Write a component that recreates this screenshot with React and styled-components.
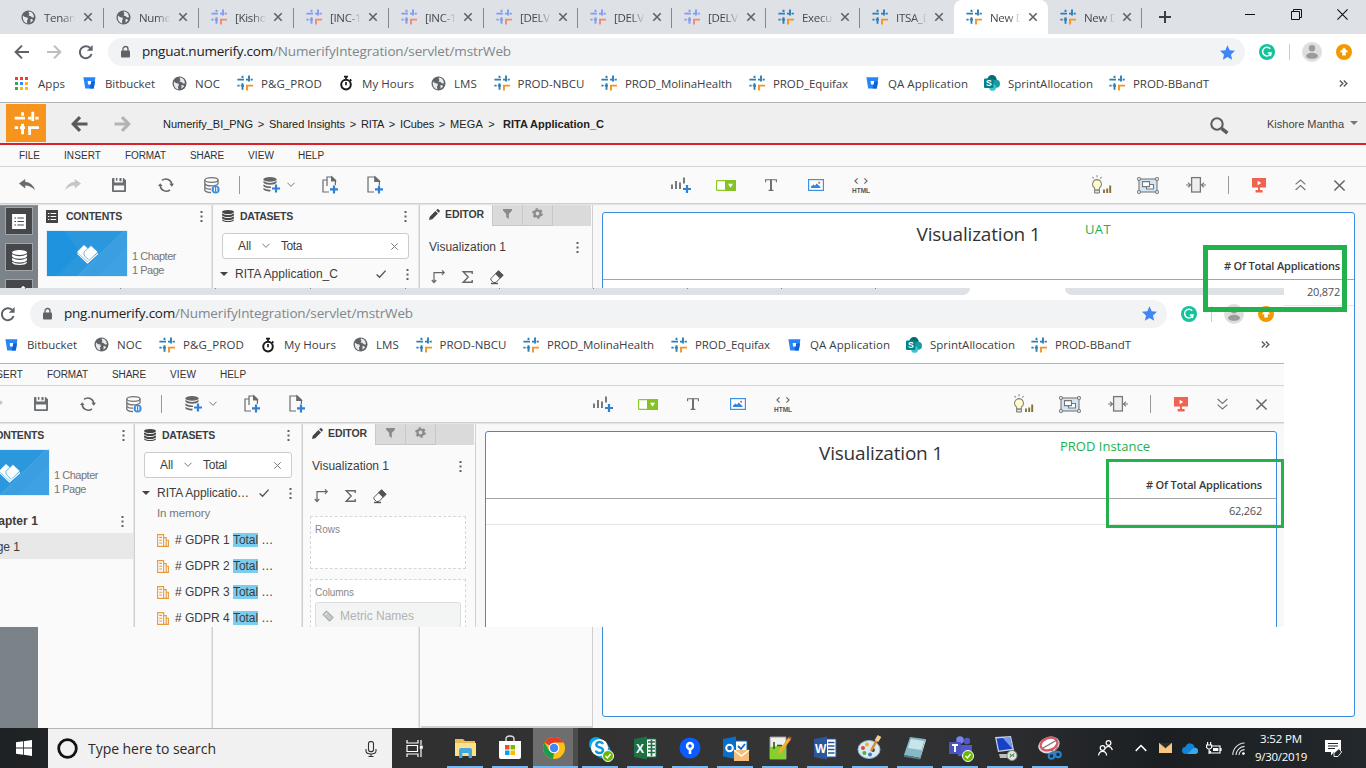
import React, { useLayoutEffect, useRef } from "react";
import styled, { createGlobalStyle, css } from "styled-components";

const UI = `"Open Sans", "Noto Sans", sans-serif`;
const ARIAL = `"Liberation Sans", Arial, sans-serif`;

const Global = createGlobalStyle`
  body { margin: 0; background: #fff; font-family: ${ARIAL}; overflow: hidden; }
  * { box-sizing: border-box; }
  svg { display: block; flex: none; overflow: visible; }
`;

/* Text tracked so that it fills a given width */
const FitSpan = styled.span`
  display: inline-block;
  white-space: pre;
  flex: none;
`;
function Fit({ w, children }) {
  const ref = useRef(null);
  useLayoutEffect(() => {
    const el = ref.current;
    el.style.letterSpacing = "0px";
    const n = el.textContent.length;
    el.style.letterSpacing = (w - el.getBoundingClientRect().width) / n + "px";
  }, [w, children]);
  return <FitSpan ref={ref}>{children}</FitSpan>;
}

/* ---------- layout ---------- */
const Screen = styled.div`
  position: relative;
  width: 1366px;
  height: 768px;
  overflow: hidden;
  display: flex;
  flex-direction: column;
  background: #fff;
`;
const Overlay = styled.div`
  position: absolute;
  left: 0;
  top: 288px;
  width: 1284px;
  height: 339px;
  overflow: hidden;
`;
const Shifted = styled.div`
  width: 1366px;
  height: 600px;
  margin-left: -78px;
  display: flex;
  flex-direction: column;
  background: #fff;
`;

/* ---------- browser ---------- */
const Strip = styled.div`
  height: ${(p) => (p.$sliver ? 7 : 34)}px;
  flex: none;
  background: #dee1e6;
  display: flex;
  align-items: flex-end;
  padding-left: 9px;
  overflow: hidden;
`;
const TabBox = styled.div`
  width: ${(p) => p.$w}px;
  height: 34px;
  flex: none;
  display: flex;
  align-items: center;
  padding-left: 12px;
  font: 11.5px ${UI};
  color: #45494d;
  border-radius: ${(p) => (p.$active ? "8px 8px 0 0" : "0")};
  background: ${(p) => (p.$active ? "#fff" : "transparent")};
  position: relative;
  ${(p) =>
    p.$sep &&
    css`
      &::after {
        content: "";
        position: absolute;
        right: 0;
        top: 8px;
        width: 1px;
        height: 20px;
        background: #85898e;
      }
    `}
`;
const CurvedTab = styled.div`
  width: 109px;
  height: 7px;
  flex: none;
  margin: 0 -7px;
  background: #fff;
  position: relative;
  &::before, &::after {
    content: "";
    position: absolute;
    top: 0;
    width: 7px;
    height: 7px;
    background: #dee1e6;
  }
  &::before { left: 0; border-bottom-right-radius: 7px; }
  &::after { right: 0; border-bottom-left-radius: 7px; }
`;
const TabTitle = styled.div`
  width: 32px;
  margin-left: 8px;
  overflow: hidden;
  white-space: nowrap;
  letter-spacing: -0.3px;
  mask-image: linear-gradient(90deg, #000 55%, transparent 98%);
`;
const TabClose = styled.div`
  margin-left: ${(p) => (p.$near ? 7 : 8)}px;
`;
const NewTab = styled.div`
  height: 34px;
  display: flex;
  align-items: center;
  margin-left: 17px;
`;
const WinButtons = styled.div`
  height: 34px;
  margin-left: auto;
  display: flex;
  gap: 35px;
  padding: 9px 18px 0 0;
`;
const NavRow = styled.div`
  height: ${(p) => (p.$low ? 37 : 36)}px;
  flex: none;
  background: #fff;
  display: flex;
  align-items: center;
  padding-left: 14px;
`;
const NavIcon = styled.div`
  width: 32px;
`;
const Omnibox = styled.div`
  width: 1137px;
  height: 28px;
  border-radius: 14px;
  background: #f1f3f4;
  margin-left: -2px;
  padding: 0 10px 0 13px;
  display: flex;
  align-items: center;
  font: 13.5px ${UI};
  color: #80868b;
  svg:last-child { margin-left: auto; }
`;
const Url = styled.div`
  margin-left: 12px;
  height: 20px;
  line-height: 19px;
  display: flex;
`;
const Host = styled.span`
  color: #202124;
`;
const NavRight = styled.div`
  display: flex;
  align-items: center;
  margin-left: 14px;
`;
const ThinRule = styled.div`
  width: 1px;
  height: 16px;
  background: #ccc;
  margin: 0 12px 0 14px;
`;
const BookmarkRow = styled.div`
  height: ${(p) => (p.$low ? 32 : 33)}px;
  flex: none;
  border-bottom: 1px solid #b4b4b4;
  display: flex;
  align-items: center;
  padding: 0 18px 6px 14px;
  font: 11.5px ${UI};
  color: #3c4043;
  background: #fff;
`;
const Bookmark = styled.div`
  width: ${(p) => p.$w}px;
  flex: none;
  display: flex;
  align-items: center;
`;
const BookmarkIcon = styled.div`
  width: 16px;
  margin-right: 8px;
  display: flex;
  justify-content: center;
`;
const More = styled.div`
  margin-left: auto;
`;

/* ---------- application ---------- */
const AppHeader = styled.div`
  height: 42px;
  flex: none;
  background: #efefef;
  border-bottom: 2px solid #d9202b;
  display: flex;
  align-items: center;
  padding: 0 8px 0 6px;
  font: 11px ${ARIAL};
  color: #222;
`;
const Logo = styled.div`
  width: 40px;
  height: 38px;
  background: #f7941e;
  display: flex;
  align-items: center;
  justify-content: center;
`;
const HeadArrow = styled.div`
  margin-left: ${(p) => p.$ml}px;
  margin-top: 2px;
`;
const Crumbs = styled.div`
  display: flex;
  margin-left: 32px;
  margin-top: 2px;
  white-space: pre;
`;
const CrumbGap = styled.span`
  width: ${(p) => p.$w || 16}px;
  text-align: center;
`;
const User = styled.div`
  margin-left: auto;
  display: flex;
  align-items: center;
  color: #444;
`;
const SearchGlass = styled.div`
  padding-top: 5px;
`;
const UserName = styled.div`
  margin: 2px 6px 0 38px;
`;
const MenuBar = styled.div`
  height: 22px;
  flex: none;
  background: #fafafa;
  border-bottom: 1px solid #d4d4d4;
  display: flex;
  align-items: center;
  gap: 24px;
  padding-left: 19px;
  font: 10px ${ARIAL};
  color: #333;
`;
const ToolRow = styled.div`
  height: 37px;
  flex: none;
  background: #fafafa;
  border-bottom: 1px solid #cfcfcf;
  box-shadow: 0 1px 1px #e4e4e4;
  display: flex;
  align-items: center;
  padding-left: 4px;
  position: relative;
`;
const Tool = styled.div`
  width: ${(p) => p.$w}px;
  margin-left: ${(p) => p.$ml || 0}px;
  flex: none;
  display: flex;
  justify-content: center;
`;
const ToolRule = styled.div`
  width: 1px;
  height: 18px;
  margin-left: ${(p) => p.$ml}px;
  background: #999;
`;
const Workspace = styled.div`
  flex: 1;
  min-height: 0;
  display: flex;
  background: #fafafa;
`;
const Rail = styled.div`
  width: 38px;
  flex: none;
  background: #7b8288;
  padding: 3px 0 0 5px;
  height: 100%;
`;
const RailButton = styled.div`
  width: 28px;
  height: 28px;
  margin-bottom: 8px;
  background: #45474a;
  border: 1px solid #a2a5a8;
  display: flex;
  align-items: center;
  justify-content: center;
`;
const Panel = styled.div`
  width: ${(p) => p.$w}px;
  flex: none;
  border-right: 1px solid #cfcfcf;
  box-shadow: inset -1px 0 0 ${(p) => (p.$soft ? "#e6e6e6" : "transparent")};
  background: #fafafa;
  color: #3d3d3d;
  font: 12px ${ARIAL};
  display: flex;
  flex-direction: column;
`;
const PanelHead = styled.div`
  height: 24px;
  flex: none;
  display: flex;
  align-items: center;
  font: bold 10.5px ${ARIAL};
  padding: 0 ${(p) => p.$pr}px 0 8px;
  gap: ${(p) => p.$gap || 6}px;
  svg:last-child { margin-left: auto; }
`;
const DocSummary = styled.div`
  display: flex;
  align-items: flex-end;
  gap: 4px;
  padding: 3px 0 0 8px;
  height: 49px;
  flex: none;
`;
const Thumb = styled.div`
  width: 82px;
  height: 47px;
  border: 1px solid #e6eef5;
  overflow: hidden;
`;
const Counts = styled.div`
  font-size: 11px;
  line-height: 14px;
  color: #777;
`;
const Chapter = styled.div`
  height: 24px;
  flex: none;
  margin-top: 13px;
  padding: 0 10px 0 22px;
  font-weight: bold;
  display: flex;
  align-items: center;
  justify-content: space-between;
`;
const PageRow = styled.div`
  height: 26px;
  flex: none;
  background: #e8e8e8;
  margin-right: 1px;
  padding-left: 22px;
  line-height: 28px;
`;
const Search = styled.div`
  height: 26px;
  flex: none;
  margin: 5px 10px 0 8px;
  border: 1px solid #ccc;
  border-radius: 3px;
  background: #fff;
  display: flex;
  align-items: center;
  padding: 0 10px 0 15px;
  svg:last-child { margin-left: auto; }
`;
const SearchText = styled.div`
  margin-left: 11px;
`;
const SearchScope = styled.div`
  margin-right: 11px;
`;
const DatasetRow = styled.div`
  height: 26px;
  flex: none;
  margin-top: 2px;
  display: flex;
  align-items: center;
  padding: 0 10px 0 6px;
`;
const DatasetName = styled.div`
  margin: 0 auto 0 7px;
`;
const Check = styled.div`
  margin-right: 20px;
`;
const Memory = styled.div`
  height: 14px;
  flex: none;
  line-height: 14px;
  padding-left: 21px;
  margin-bottom: 7px;
  font-size: 11.5px;
  color: #777;
`;
const Attr = styled.div`
  height: 26px;
  flex: none;
  padding-left: 21px;
  display: flex;
  align-items: center;
  gap: 6px;
`;
const Mark = styled.span`
  background: #7bcdf0;
  display: inline-block;
  height: 14px;
  line-height: 14px;
`;
const AttrText = styled.div`
  display: flex;
  line-height: 14px;
  white-space: pre;
`;
const EditorTabs = styled.div`
  height: 22px;
  flex: none;
  display: flex;
  margin-right: 1px;
  background: #dadada;
`;
const EditorTab = styled.div`
  width: ${(p) => p.$w}px;
  display: flex;
  align-items: center;
  justify-content: ${(p) => (p.$on ? "flex-start" : "center")};
  gap: 5px;
  padding: 0 0 2px ${(p) => (p.$on ? 8 : 0)}px;
  font: bold 10.5px ${ARIAL};
  background: ${(p) => (p.$on ? "#fafafa" : "#dadada")};
  border-right: 1px solid #c8c8c8;
  border-bottom: ${(p) => (p.$on ? "none" : "1px solid #c8c8c8")};
`;
const EditorTitle = styled.div`
  height: 41px;
  flex: none;
  padding: 1px 13px 0 8px;
  display: flex;
  align-items: center;
  justify-content: space-between;
`;
const EditorTools = styled.div`
  height: 18px;
  flex: none;
  display: flex;
  align-items: center;
  padding: 1px 0 0 10px;
  gap: 17px;
`;
const EditorEnd = styled.div`
  margin-top: auto;
  height: 2px;
  background: #cfcfcf;
`;
const Drop = styled.div`
  margin: ${(p) => p.$mt}px 9px 0 6px;
  height: ${(p) => p.$h}px;
  flex: none;
  border: 1px dashed #d6d6d6;
  background: #fff;
  padding: 7px 4px 0;
  font: 10px ${ARIAL};
  color: #888;
`;
const Metric = styled.div`
  height: 26px;
  margin-top: 4px;
  border: 1px solid #ddd;
  border-radius: 3px;
  background: #f3f5f5;
  display: flex;
  align-items: center;
  padding: 1px 0 0 6px;
  gap: 6px;
  font-size: 12px;
  color: #b2b2b2;
`;
const Stage = styled.div`
  flex: 1;
  min-width: 0;
  background: #f8f8f8;
  padding: 8px 11px 11px 9px;
  display: flex;
`;
const Canvas = styled.div`
  flex: 1;
  border: 1px solid #3a8dde;
  border-radius: 3px;
  background: #fff;
  font-family: ${UI};
  color: #333;
`;
const VizTitle = styled.div`
  height: 42px;
  text-align: center;
  font-size: 19px;
  line-height: 43px;
`;
const HeadCell = styled.div`
  height: 25px;
  border-bottom: 1px solid #a5a5a5;
  text-align: right;
  padding-right: 14px;
  font-size: 11px;
  font-weight: 600;
  line-height: 22px;
  color: #3a3a3a;
`;
const ValueCell = styled.div`
  height: 26px;
  border-bottom: 1px solid #e6e6e6;
  text-align: right;
  padding-right: 14px;
  font-size: 11px;
  line-height: 23px;
  color: #505050;
`;

/* ---------- annotations ---------- */
const GreenBox = styled.div`
  position: absolute;
  left: ${(p) => p.$x}px;
  top: ${(p) => p.$y}px;
  width: ${(p) => p.$w}px;
  height: ${(p) => p.$h}px;
  border: ${(p) => p.$b}px solid #22b14c;
`;
const GreenText = styled.div`
  position: absolute;
  left: ${(p) => p.$x}px;
  top: ${(p) => p.$y}px;
  font: 13px/16px ${UI};
  color: #22b14c;
`;

/* ---------- taskbar ---------- */
const Taskbar = styled.div`
  height: 40px;
  flex: none;
  background: linear-gradient(90deg, #1f2224 0, #303030 30%, #353535 60%, #2e2f31 72%, #1b1f22 85%, #22282c 100%);
  display: flex;
  align-items: center;
  position: relative;
`;
const Start = styled.div`
  width: 48px;
  display: flex;
  justify-content: center;
`;
const TaskSearch = styled.div`
  width: 344px;
  height: 40px;
  background: #f1f1f1;
  border-top: 1px solid #b5b5b5;
  display: flex;
  align-items: center;
  padding: 0 15px 0 9px;
  font: 14px ${UI};
  color: #2b2b2b;
  gap: 10px;
  svg:last-child { margin-left: auto; }
`;
const TaskCell = styled.div`
  width: 45px;
  height: 40px;
  flex: none;
  display: flex;
  align-items: center;
  justify-content: center;
  position: relative;
  ${(p) =>
    p.$run &&
    css`
      &::after {
        content: "";
        position: absolute;
        left: ${p.$hot ? 0 : 4}px;
        right: ${p.$hot ? 0 : 5}px;
        bottom: 0;
        height: 2px;
        background: #76b9f5;
      }
    `}
  ${(p) => p.$hot && css`background: linear-gradient(90deg, #6e6e6e 40px, #4c4c4c 40px); padding-right: 3px;`}
`;
const Gap = styled.div`
  width: ${(p) => p.$w}px;
  flex: none;
`;
const Tray = styled.div`
  display: flex;
  align-items: center;
  margin-left: 21px;
`;
const TrayItem = styled.div`
  width: 24.5px;
  display: flex;
  justify-content: center;
`;
const Clock = styled.div`
  width: 62px;
  margin-left: -1px;
  font: 11.5px/18px ${UI};
  color: #fff;
  text-align: center;
`;

/* ---------- icons ---------- */
const Hash = ({ s = 16, c = "#2a7fb5", o = "#f7941e", k = 1.9 }) => (
  <svg width={s} height={s} viewBox="0 0 16 16" fill="none" stroke={c} strokeWidth={k}>
    <path d="M5.5 .8V3M.4 4.6H7M12 .4V6.4M9 4.6H11M13.6 4.6H15.8M.4 10.6H2.6M3.8 10.6H7M5.5 8.2V14.8" />
    <path d="M9 10.6H16M10 10.6V15.4" stroke={o} />
  </svg>
);
const LightHash = () => <Hash c="#7f9cf5" o="#f58a6d" />;
const Globe = () => (
  <svg width="15" height="15" viewBox="0 0 15 15">
    <circle cx="7.5" cy="7.5" r="7" fill="#5f6368" />
    <path d="M2 5.5 Q4 7.8 6.5 7.5 Q7.5 9.5 6 10.5 L6.3 13.4 Q2.3 12.4 1.8 8ZM8 1.6 Q7 3 8.5 4 L7.5 5.6 L10 6.2 Q11 8.4 13 7 Q13 4 10.5 2.3ZM9.5 9 Q12 8.5 12 10.5 L9.5 12.8Z" fill="#e8eaec" />
  </svg>
);
const Cross = ({ s = 8, c = "#5f6368", k = 1.6 }) => (
  <svg width={s} height={s} viewBox="0 0 8 8" stroke={c} strokeWidth={k}>
    <path d="M.3 .3 7.7 7.7M7.7 .3 .3 7.7" />
  </svg>
);
const Bucket = () => (
  <svg width="13" height="12" viewBox="0 0 13 12">
    <path d="M.4 .3H12.4L10.8 11.6H2.2Z" fill="#2684ff" />
    <path d="M8 4.5H12L10.8 11.6H6.5Z" fill="#1360d6" />
    <path d="M4.6 4H8.2L7.7 7.6H5.1Z" fill="#fff" />
  </svg>
);
const Apps = () => (
  <svg width="14" height="13" viewBox="0 0 14 13">
    {["#ea4335", "#ea4335", "#ea4335", "#34a853", "#4285f4", "#fbbc05", "#34a853", "#fbbc05", "#fbbc05"].map((c, i) => (
      <rect key={i} x={(i % 3) * 5} y={Math.floor(i / 3) * 5} width="3" height="3" fill={c} />
    ))}
  </svg>
);
const Watch = () => (
  <svg width="14" height="16" viewBox="0 0 14 16" fill="none" stroke="#1b1b1b" strokeWidth="2">
    <circle cx="7" cy="9.6" r="4.8" />
    <path d="M5 1.6H9M7 1.4V4.4M7 7V10.2M11 4.4 12.4 5.8" strokeWidth="1.7" />
  </svg>
);
const SharePoint = () => (
  <svg width="16" height="16" viewBox="0 0 16 16">
    <circle cx="8" cy="4.8" r="4.7" fill="#036c70" />
    <circle cx="12" cy="8.8" r="4" fill="#1a9ba1" />
    <circle cx="8.6" cy="12.4" r="3.4" fill="#37c6d0" />
    <rect x="0" y="3.4" width="9.4" height="9.6" rx="1" fill="#038387" />
    <text x="2" y="11.2" fontSize="8.6" fontWeight="700" fill="#fff" fontFamily="Liberation Sans">S</text>
  </svg>
);
const Reload = () => (
  <svg width="16" height="16" viewBox="0 0 16 16" fill="none" stroke="#5f6368" strokeWidth="2">
    <path d="M13.6 10A6 6 0 1 1 12 3.8" />
    <path d="M14.6 1V6.8H8.8Z" fill="#5f6368" stroke="none" />
  </svg>
);
const NavArrow = ({ dim }) => (
  <svg width="16" height="16" viewBox="0 0 16 16" fill="none" stroke={dim ? "#bcbec0" : "#5f6368"} strokeWidth="2" transform={dim ? "scale(-1 1)" : undefined}>
    <path d="M15 8H2.4M8 1.6 1.6 8 8 14.4" />
  </svg>
);
const MoreIcon = () => (
  <svg width="9" height="7" viewBox="0 0 9 7" fill="none" stroke="#5f6368" strokeWidth="1.5">
    <path d="M.8 .5 3.8 3.5.8 6.5M4.8 .5 7.8 3.5 4.8 6.5" />
  </svg>
);
const HeavyArrow = ({ dim }) => (
  <svg width="17" height="16" viewBox="0 0 17 16" fill="none" stroke={dim ? "#b4b4b4" : "#5a5a5a"} strokeWidth="3.2" transform={dim ? "scale(-1 1)" : undefined}>
    <path d="M16.5 8H3M9 1.2 2.3 8 9 14.8" />
  </svg>
);
const Lock = () => (
  <svg width="9" height="12" viewBox="0 0 9 12">
    <rect x="0" y="4.4" width="9" height="7.2" rx="1" fill="#5f6368" />
    <path d="M2 5V3A2.5 2.5 0 0 1 7 3V5" fill="none" stroke="#5f6368" strokeWidth="1.3" />
  </svg>
);
const Star = () => (
  <svg width="15" height="15" viewBox="0 0 24 24">
    <path d="M12 .5 15.5 8.4 24 9.2 17.6 15 19.4 23.4 12 19 4.6 23.4 6.4 15 0 9.2 8.5 8.4Z" fill="#4285f4" />
  </svg>
);
const Grammarly = () => (
  <svg width="16" height="16" viewBox="0 0 16 16">
    <circle cx="8" cy="8" r="8" fill="#15c39a" />
    <path d="M11.2 4.8A4.3 4.3 0 1 0 12 9H8.8M12 9 11.3 12.2" fill="none" stroke="#fff" strokeWidth="1.5" />
  </svg>
);
const Person = () => (
  <svg width="20" height="20" viewBox="0 0 20 20">
    <circle cx="10" cy="10" r="10" fill="#dedede" />
    <circle cx="10" cy="6.2" r="3.2" fill="#9b9b9b" />
    <ellipse cx="10" cy="13.8" rx="6" ry="3" fill="#9b9b9b" />
  </svg>
);
const UpBadge = () => (
  <svg width="16" height="16" viewBox="0 0 16 16">
    <circle cx="8" cy="8" r="8" fill="#f29900" />
    <path d="M8 3.6 12.4 8.2H9.8V11.6H6.2V8.2H3.6Z" fill="#fff" />
  </svg>
);
const Dots = () => (
  <svg width="3" height="11" viewBox="0 0 3 11" fill="#606060">
    <rect x=".5" width="2" height="2" />
    <rect x=".5" y="4.5" width="2" height="2" />
    <rect x=".5" y="9" width="2" height="2" />
  </svg>
);
const Stack = ({ s = 12, c = "#444" }) => (
  <svg width={s} height={s} viewBox="0 0 12 12" fill={c}>
    <ellipse cx="6" cy="2" rx="6" ry="2" />
    <path d="M0 3.4Q6 6.6 12 3.4V5Q11 7 6 7T0 5ZM0 6.4Q6 9.6 12 6.4V8Q11 10 6 10T0 8ZM0 9.4Q6 12.4 12 9.4V10Q11 12 6 12T0 10Z" />
  </svg>
);
const ListIcon = ({ w = 12, h = 13, bg = "#444", fg = "#fff" }) => (
  <svg width={w} height={h} viewBox="0 0 12 13">
    <rect width="12" height="13" fill={bg} />
    <path d="M2 3.5H3.4M4.6 3.5H10.2M2 6.5H3.4M4.6 6.5H10.2M2 9.5H3.4M4.6 9.5H10.2" stroke={fg} strokeWidth="1" />
  </svg>
);
const Pencil = ({ s = 12, c = "#444" }) => (
  <svg width={s} height={s} viewBox="0 0 12 12" fill={c}>
    <path d="M0 12 .8 8.4 7 2.2 9.8 5 3.6 11.2ZM7.8 1.4 9 .2Q9.6-.2 10.3.4L11.6 1.7Q12 2.3 11.7 2.9L10.6 4.2Z" />
  </svg>
);
const Chev = ({ w = 8, d = "M.5 .8 4 4.4 7.5 .8", c = "#777" }) => (
  <svg width={w} height={w * 0.65} viewBox="0 0 8 5.2" fill="none" stroke={c} strokeWidth="1">
    <path d={d} />
  </svg>
);
const Plus = ({ x, y }) => <path d={`M${x} ${y - 4}V${y + 4}M${x - 4} ${y}H${x + 4}`} stroke="#2f80d8" strokeWidth="2.2" />;

const UndoIcon = ({ dim }) => (
  <svg width="16" height="12" viewBox="0 0 16 12" fill={dim ? "#c6c6c6" : "#6b6b6b"} transform={dim ? "scale(-1 1)" : undefined}>
    <path d="M0 4.6 6.2 0V2.8Q13.5 3.4 16 11.2 11 6.4 6.2 6.6V9.4Z" />
  </svg>
);
const SaveIcon = () => (
  <svg width="14" height="14" viewBox="0 0 15 15" fill="#6b6e70">
    <path d="M0 1Q0 0 1 0H2.6V4.8H11.6V0H12.4L15 2.4V14Q15 15 14 15H1Q0 15 0 14ZM2 8V13H13V8Z" fillRule="evenodd" />
    <path d="M4.2 0H5.8V3H4.2ZM8 0H10.2V3.6H8Z" />
  </svg>
);
const RefreshIcon = () => (
  <svg width="16" height="14" viewBox="0 0 16 14" fill="none" stroke="#666" strokeWidth="1.5">
    <path d="M4 2.4A6 6 0 0 1 13.8 6.6M12 11.8A6 6 0 0 1 2.2 7.6" />
    <path d="M11.3 5.8H16L13.8 8.8ZM4.6 8H0L2.2 5.2Z" fill="#666" stroke="none" />
  </svg>
);
const DbPause = () => (
  <svg width="16" height="17" viewBox="0 0 16 17" fill="none" stroke="#757575" strokeWidth="1.3">
    <ellipse cx="7.4" cy="3" rx="6.6" ry="2.3" />
    <path d="M.8 3V13.4Q2 15.6 7 15.5M14 3V7M.8 6.6Q2 8.9 7.4 8.9T14 6.8M.8 10Q2 12.2 7 12.2" />
    <circle cx="11.6" cy="12.4" r="4" fill="#3b8de0" stroke="none" />
    <path d="M10.4 10.3V14.5M12.8 10.3V14.5" stroke="#fff" strokeWidth="1.1" />
  </svg>
);
const DbPlus = () => (
  <svg width="18" height="16" viewBox="0 0 18 16" fill="#666">
    <ellipse cx="7" cy="2.4" rx="6.6" ry="2.4" />
    <path d="M.4 4Q7 8 13.6 4V5.6Q12 7.8 7 7.8T.4 5.6ZM.4 7.6Q4 9.8 8 9.4V11Q2 11.2.4 9.2ZM.4 11Q4 13 7.4 12.6V14.4Q2 14.6.4 12.6Z" />
    <Plus x={13} y={11.5} />
  </svg>
);
const PagePlus = ({ two }) => (
  <svg width="16" height="18" viewBox="0 0 16 18" fill="none" stroke="#6a6a6a" strokeWidth="1.2">
    {two ? <path d="M7 16H1V4H5M5 10V1H10L13.4 4.2V9M9.6 1V4.6H13.4" /> : <path d="M7 16H1V1H8L12.4 5V9M8 1V5.4H12.4" />}
    <path d={two ? "M9.6 1 13.4 4.6H9.6Z" : "M8 1 12.4 5.4H8Z"} fill="#6a6a6a" />
    <Plus x={12} y={13.4} />
  </svg>
);
const BarsPlus = () => (
  <svg width="20" height="16" viewBox="0 0 20 16">
    <path d="M1 7.4V12M5 4V12M9 5.4V12M13 .4V6.4" stroke="#6d6d6d" strokeWidth="1.8" />
    <Plus x={16} y={12} />
  </svg>
);
const Selector = () => (
  <svg width="20" height="11" viewBox="0 0 20 11">
    <rect x=".6" y=".6" width="18.8" height="9.8" rx=".6" fill="#fff" stroke="#8ac926" strokeWidth="1.2" />
    <rect x="9" width="11" height="11" fill="#84c225" />
    <path d="M12 3.8H17L14.5 7.8Z" fill="#fff" />
  </svg>
);
const ImageIcon = () => (
  <svg width="16" height="12" viewBox="0 0 16 12">
    <rect x=".6" y=".6" width="14.8" height="10.8" fill="#fff" stroke="#3f91e6" strokeWidth="1.2" />
    <path d="M3 9V7.6L5.6 5.4 7 6.8 8.6 4.4 12.4 8V9Z" fill="#3185da" />
    <rect x="10.2" y="2.8" width="1.9" height="1.9" fill="#f0614e" />
  </svg>
);
const TIcon = () => (
  <svg width="12" height="12" viewBox="0 0 12 12" fill="none" stroke="#6b6b6b">
    <path d="M.6 3.2V.8H11.4V3.2M3.6 11.4H8.4" strokeWidth="1.1" />
    <path d="M6 .8V11.4" strokeWidth="1.9" />
  </svg>
);
const HtmlBox = styled.div`
  display: flex;
  flex-direction: column;
  align-items: center;
  gap: 3px;
  padding-top: 1px;
  font: bold 6.5px/7px ${ARIAL};
  color: #555;
`;
const HtmlIcon = () => (
  <HtmlBox>
    <svg width="14" height="6" viewBox="0 0 14 6" fill="none" stroke="#666" strokeWidth="1.1">
      <path d="M3.6 .3.9 3 3.6 5.7M10.4 .3 13.1 3 10.4 5.7" />
    </svg>
    <Fit w={18}>HTML</Fit>
  </HtmlBox>
);
const Bulb = () => (
  <svg width="20" height="20" viewBox="0 0 20 20" fill="none">
    <path d="M6 0V2.4M1.4 1.8 2.8 3.6M10.6 1.8 9.2 3.6" stroke="#999" strokeWidth="1.1" />
    <path d="M6 4.6A4.6 4.6 0 0 0 3.6 13V15H8.4V13A4.6 4.6 0 0 0 6 4.6Z" fill="#fffbd0" stroke="#8a8a70" strokeWidth="1.1" />
    <path d="M3.6 15.2H8.4V18H3.6Z" fill="#e6e6e6" stroke="#777" strokeWidth="1" />
    <path d="M13 18V14.4M16.2 18V13.4M19.2 18V10.5" stroke="#857237" strokeWidth="1.9" />
  </svg>
);
const GroupIcon = () => (
  <svg width="22" height="17" viewBox="0 0 22 17" fill="none" stroke="#777" strokeWidth="1.1">
    <rect x="2" y="2" width="18" height="13" fill="#d3e6f8" />
    <path d="M9.5 7.5H16.5V12H9.5Z" fill="#fff" />
    <path d="M5.5 4.6H12.5V9.6H5.5Z" fill="#fff" />
    <g fill="#fff">
      <circle cx="2" cy="2" r="1.5" /><circle cx="20" cy="2" r="1.5" /><circle cx="2" cy="15" r="1.5" /><circle cx="20" cy="15" r="1.5" />
    </g>
  </svg>
);
const FitIcon = () => (
  <svg width="20" height="16" viewBox="0 0 20 16" fill="none" stroke="#777" strokeWidth="1.1">
    <rect x="5.6" y=".6" width="8.8" height="14.4" fill="#eee" strokeWidth="1.3" />
    <path d="M0 8H4.4M2 5.6 4.6 8 2 10.4M20 8H15.6M18 5.6 15.4 8 18 10.4" />
  </svg>
);
const Present = () => (
  <svg width="14" height="15" viewBox="0 0 14 15" fill="#ef6351">
    <path d="M0 0H14V9.4H8V12H10.6V14.4H3.6V12H6V9.4H0Z" />
    <path d="M5.6 2.8 9.2 5 5.6 7.2Z" fill="#fff" />
  </svg>
);
const DoubleChev = ({ down }) => (
  <svg width="11" height="12" viewBox="0 0 11 12" fill="none" stroke="#777" strokeWidth="1.2" transform={down ? "scale(1 -1)" : undefined}>
    <path d="M.6 5.4 5.5 1 10.4 5.4M.6 11 5.5 6.6 10.4 11" />
  </svg>
);
const Magnify = () => (
  <svg width="19" height="18" viewBox="0 0 19 18" fill="none" stroke="#5d5d5d">
    <circle cx="7" cy="7" r="5.7" strokeWidth="2.1" />
    <path d="M11.6 11.4 17.4 16.2" strokeWidth="3.6" />
  </svg>
);
const Caret = ({ w = 8, c = "#444" }) => (
  <svg width={w} height={w / 2} viewBox="0 0 8 4"><path d="M0 0H8L4 4Z" fill={c} /></svg>
);
const CheckIcon = () => (
  <svg width="10" height="8" viewBox="0 0 10 8" fill="none" stroke="#555" strokeWidth="1.4"><path d="M.6 4.4 3.6 7.2 9.6 .6" /></svg>
);
const BookArt = () => (
  <svg width="80" height="45" viewBox="0 0 80 45">
    <rect width="80" height="45" fill="#2b98de" />
    <path d="M0 0H18L33 22 10 45H0Z" fill="#1f93dd" />
    <path d="M80 0V45H30L76 0Z" fill="#45a4e3" opacity=".75" />
    <path d="M66 12 80 0V14L50 45H35Z" fill="#3a9ee0" />
    <path d="M30 21 37 14 48 24 41 31Z" fill="#fff" />
    <path d="M37 21 44 14.5 51 21 42 29.5 37 24Z" fill="#fff" stroke="#2b98de" strokeWidth=".7" />
    <path d="M30.5 22.5 40.5 32 51 22.5" fill="none" stroke="#fff" strokeWidth="1.1" />
  </svg>
);
const Pivot = () => (
  <svg width="14" height="14" viewBox="0 0 14 14" fill="none" stroke="#666" strokeWidth="1.2">
    <path d="M3 11.6V2.6H13M11 .4 13.2 2.6 11 4.8M.8 10 3 12.6 5.2 10" />
  </svg>
);
const Sigma = () => (
  <svg width="11" height="12" viewBox="0 0 11 12" fill="none" stroke="#666" strokeWidth="1.4">
    <path d="M10.2 3V.8H1.2L6.2 6 1.2 11.2H10.2V9" />
  </svg>
);
const Eraser = () => (
  <svg width="14" height="14" viewBox="0 0 14 14" fill="none" stroke="#555" strokeWidth="1">
    <path d="M1 8.4 8.4 1 13 5.2 6 12.4H3.4L.8 10Z" fill="#fff" />
    <path d="M5.6 3.8 8.6.8 13.2 5.2 10 8.2Z" fill="#555" />
    <path d="M1 13.5H8" strokeWidth="1.4" />
  </svg>
);
const Funnel = () => (
  <svg width="9" height="10" viewBox="0 0 9 10"><path d="M0 0H9V1.4L5.8 5V10L3.2 8V5L0 1.4Z" fill="#8a8a8a" /></svg>
);
const Gear = () => (
  <svg width="11" height="11" viewBox="0 0 11 11" fill="none">
    <circle cx="5.5" cy="5.5" r="3" stroke="#8a8a8a" strokeWidth="2.2" />
    <circle cx="5.5" cy="5.5" r="4.6" stroke="#8a8a8a" strokeWidth="1.5" strokeDasharray="2.4 2.4" />
  </svg>
);
const AttrIcon = () => (
  <svg width="12" height="13" viewBox="0 0 12 13" fill="none" stroke="#e69a3c" strokeWidth="1.1">
    <path d="M.6 .6H6.6V12.4H.6ZM6.6 3.6H9.2V12.4M9.2 6.2H11.4V12.4H.6M2.2 3.4H5M2.2 6.2H5M2.2 9H5" />
  </svg>
);
const TagIcon = () => (
  <svg width="12" height="12" viewBox="0 0 12 12" fill="#c8c8c8" stroke="#999" strokeWidth="1">
    <path d="M1 4.6 4.4 1 11.2 7.4 7.6 11.2Z" /><path d="M3.4 4.8 5 3.2" stroke="#fff" />
  </svg>
);

/* ---------- browser chrome ---------- */
const TABS = [
  [Globe, "Tenant"], [Globe, "Numerify"], [LightHash, "[Kishore"], [LightHash, "[INC-1"], [LightHash, "[INC-1"],
  [LightHash, "[DELV"], [LightHash, "[DELV"], [LightHash, "[DELV"], [Hash, "Execut"], [Hash, "ITSA_D"],
  [Hash, "New D"], [Hash, "New D"],
];
const tabWidth = (i) => (i < 5 ? 95 : 94);
function TabStrip() {
  return (
    <Strip>
      {TABS.map(([Icon, title], i) => (
        <TabBox key={i} $w={tabWidth(i)} $active={i === 10} $sep={i !== 9 && i !== 10}>
          <Icon />
          <TabTitle>{title}</TabTitle>
          <TabClose $near={Icon !== Globe}><Cross /></TabClose>
        </TabBox>
      ))}
      <NewTab>
        <svg width="12" height="12" viewBox="0 0 12 12" stroke="#3c4043" strokeWidth="2"><path d="M6 0V12M0 6H12" /></svg>
      </NewTab>
      <WinButtons>
        <svg width="11" height="11" viewBox="0 0 11 11" stroke="#111"><path d="M0 5.5H10" /></svg>
        <svg width="11" height="11" viewBox="0 0 11 11" stroke="#111" fill="none"><path d="M.5 2.5H8.5V10.5H.5ZM2.5 2.5V.5H10.5V8.5H8.5" /></svg>
        <Cross s={11} c="#111" k={0.8} />
      </WinButtons>
    </Strip>
  );
}
function StripEdge() {
  return (
    <Strip $sliver>
      {TABS.slice(0, 11).map((t, i) => <TabBox key={i} $w={tabWidth(i)} $sep={i < 10} />)}
      <CurvedTab />
    </Strip>
  );
}
const BOOKMARKS = [
  [Apps, "Apps", 67, 27], [Bucket, "Bitbucket", 90, 50], [Globe, "NOC", 66, 25], [Hash, "P&G_PROD", 101, 61],
  [Watch, "My Hours", 92, 52], [Globe, "LMS", 63.5, 23], [Hash, "PROD-NBCU", 107.5, 67], [Hash, "PROD_MolinaHealth", 148, 107],
  [Hash, "PROD_Equifax", 115, 75], [Bucket, "QA Application", 120, 80], [SharePoint, "SprintAllocation", 125, 85],
  [Hash, "PROD-BBandT", 110, 76],
];
function Browser({ low, host, hostW }) {
  return (
    <>
      <NavRow $low={low}>
        <NavIcon><NavArrow /></NavIcon>
        <NavIcon><NavArrow dim /></NavIcon>
        <NavIcon><Reload /></NavIcon>
        <Omnibox>
          <Lock />
          <Url>
            <Host><Fit w={hostW}>{host}</Fit></Host>
            <Fit w={238}>/NumerifyIntegration/servlet/mstrWeb</Fit>
          </Url>
          <Star />
        </Omnibox>
        <NavRight>
          <Grammarly />
          <ThinRule />
          <Person />
          <Gap $w={14} />
          <UpBadge />
        </NavRight>
      </NavRow>
      <BookmarkRow $low={low}>
        {BOOKMARKS.map(([Icon, label, w, tw]) => (
          <Bookmark key={label} $w={w}>
            <BookmarkIcon><Icon /></BookmarkIcon>
            <Fit w={tw}>{label}</Fit>
          </Bookmark>
        ))}
        <More><MoreIcon /></More>
      </BookmarkRow>
    </>
  );
}

/* ---------- application parts ---------- */
const CRUMBS = [["Numerify_BI_PNG", 90], ["Shared Insights", 76], ["RITA", 23], ["ICubes", 34], ["MEGA", 33]];
function Header() {
  return (
    <AppHeader>
      <Logo><Hash s={25} c="#fff" o="#fff" k={1.8} /></Logo>
      <HeadArrow $ml={25}><HeavyArrow /></HeadArrow>
      <HeadArrow $ml={26}><HeavyArrow dim /></HeadArrow>
      <Crumbs>
        {CRUMBS.map(([t, w], i) => (
          <React.Fragment key={t}>
            <Fit w={w}>{t}</Fit>
            <CrumbGap $w={i === 4 ? 20 : 16}>{i === 4 ? "> " : ">"}</CrumbGap>
          </React.Fragment>
        ))}
        <b><Fit w={101}>RITA Application_C</Fit></b>
      </Crumbs>
      <User>
        <SearchGlass><Magnify /></SearchGlass>
        <UserName><Fit w={77}>Kishore Mantha</Fit></UserName>
        <Caret c="#777" />
      </User>
    </AppHeader>
  );
}
const MENUS = [["FILE", 21], ["INSERT", 37], ["FORMAT", 41], ["SHARE", 34], ["VIEW", 26], ["HELP", 26]];
function Tools({ down }) {
  return (
    <>
      <MenuBar>{MENUS.map(([t, w]) => <Fit key={t} w={w}>{t}</Fit>)}</MenuBar>
      <ToolRow>
        <Tool $w={46}><UndoIcon /></Tool>
        <Tool $w={46}><UndoIcon dim /></Tool>
        <Tool $w={46}><SaveIcon /></Tool>
        <Tool $w={47}><RefreshIcon /></Tool>
        <Tool $w={45}><DbPause /></Tool>
        <ToolRule $ml={5} />
        <Tool $w={20} $ml={22}><DbPlus /></Tool>
        <Tool $w={10} $ml={4}><Chev /></Tool>
        <Tool $w={18} $ml={25}><PagePlus two /></Tool>
        <Tool $w={18} $ml={27}><PagePlus /></Tool>
        <Tool $w={20} $ml={287}><BarsPlus /></Tool>
        <Tool $w={20} $ml={25}><Selector /></Tool>
        <Tool $w={20} $ml={25}><TIcon /></Tool>
        <Tool $w={20} $ml={25}><ImageIcon /></Tool>
        <Tool $w={20} $ml={25}><HtmlIcon /></Tool>
        <Tool $w={22} $ml={219}><Bulb /></Tool>
        <Tool $w={22} $ml={25}><GroupIcon /></Tool>
        <Tool $w={22} $ml={26}><FitIcon /></Tool>
        <ToolRule $ml={21} />
        <Tool $w={20} $ml={20}><Present /></Tool>
        <Tool $w={20} $ml={21}><DoubleChev down={down} /></Tool>
        <Tool $w={20} $ml={19}><Cross s={11} c="#666" k={1.1} /></Tool>
      </ToolRow>
    </>
  );
}
function Work({ detail, query, datasetW, value }) {
  return (
    <Workspace>
      <Rail>
        <RailButton><ListIcon w={14} h={15} bg="#fff" fg="#45474a" /></RailButton>
        <RailButton><Stack s={15} c="#fff" /></RailButton>
        <RailButton><Pencil s={14} c="#fff" /></RailButton>
      </Rail>
      <Panel $w={175} $soft>
        <PanelHead $pr={9} $gap={8}>
          <ListIcon />
          <Fit w={56}>CONTENTS</Fit>
          <Dots />
        </PanelHead>
        <DocSummary>
          <Thumb><BookArt /></Thumb>
          <Counts>
            <div><Fit w={44}>1 Chapter</Fit></div>
            <div><Fit w={32}>1 Page</Fit></div>
          </Counts>
        </DocSummary>
        {detail && (
          <>
            <Chapter><Fit w={56}>Chapter 1</Fit><Dots /></Chapter>
            <PageRow><Fit w={38}>Page 1</Fit></PageRow>
          </>
        )}
      </Panel>
      <Gap $w={1} />
      <Panel $w={datasetW} $soft>
        <PanelHead $pr={12}>
          <Stack />
          <Fit w={53}>DATASETS</Fit>
          <Dots />
        </PanelHead>
        <Search>
          <SearchScope><Fit w={13}>All</Fit></SearchScope>
          <Chev />
          <SearchText><Fit w={query.length === 4 ? 21 : 24}>{query}</Fit></SearchText>
          <Cross s={7} c="#777" k={1.1} />
        </Search>
        <DatasetRow>
          <Caret />
          <DatasetName>
            {detail ? <Fit w={92}>RITA Applicatio…</Fit> : <Fit w={103}>RITA Application_C</Fit>}
          </DatasetName>
          <Check><CheckIcon /></Check>
          <Dots />
        </DatasetRow>
        {detail && (
          <>
            <Memory><Fit w={53}>In memory</Fit></Memory>
            {[1, 2, 3, 4].map((n) => (
              <Attr key={n}>
                <AttrIcon />
                <AttrText>
                  <Fit w={58}>{`# GDPR ${n} `}</Fit>
                  <Mark><Fit w={25}>Total</Fit></Mark> …
                </AttrText>
              </Attr>
            ))}
          </>
        )}
      </Panel>
      <Gap $w={1} />
      <Panel $w={172}>
        <EditorTabs>
          <EditorTab $w={72} $on>
            <Pencil s={11} />
            <Fit w={39}>EDITOR</Fit>
          </EditorTab>
          <EditorTab $w={30}><Funnel /></EditorTab>
          <EditorTab $w={30}><Gear /></EditorTab>
        </EditorTabs>
        <EditorTitle><Fit w={77}>Visualization 1</Fit><Dots /></EditorTitle>
        <EditorTools><Pivot /><Sigma /><Eraser /></EditorTools>
        {detail ? (
          <>
            <Drop $mt={12} $h={53}><Fit w={25}>Rows</Fit></Drop>
            <Drop $mt={10} $h={80}>
              <Fit w={39}>Columns</Fit>
              <Metric><TagIcon /><Fit w={74}>Metric Names</Fit></Metric>
            </Drop>
          </>
        ) : (
          <EditorEnd />
        )}
      </Panel>
      <Stage>
        <Canvas>
          <VizTitle><Fit w={124}>Visualization 1</Fit></VizTitle>
          <HeadCell><Fit w={116}># Of Total Applications</Fit></HeadCell>
          <ValueCell><Fit w={33}>{value}</Fit></ValueCell>
        </Canvas>
      </Stage>
    </Workspace>
  );
}

/* ---------- taskbar icons ---------- */
const T = ({ children }) => <svg width="24" height="24" viewBox="0 0 24 24">{children}</svg>;
const Office = ({ c, l, lines }) => (
  <T>
    <path d="M12 3H23V21H12Z" fill="#fff" stroke={c} />
    <path d={lines} stroke={c} strokeWidth="1.6" />
    <path d="M1 3 14 .5V23.5L1 21Z" fill={c} />
    <text x={l === "W" ? 2 : 3} y="16.5" fontSize="12" fontWeight="700" fill="#fff" fontFamily="Liberation Sans">{l}</text>
  </T>
);
const Ok = () => (
  <g>
    <circle cx="20" cy="20" r="5.5" fill="#6bb700" stroke="#fff" />
    <path d="M17.5 20 19.4 22 22.6 18" fill="none" stroke="#fff" strokeWidth="1.4" />
  </g>
);
const TASKS = [
  <T><path d="M2 3H10L12 5H22V20H2Z" fill="#e9bd52" /><path d="M2 7H23V20H2Z" fill="#ffe08a" /><path d="M6 22V14Q6 12 8 12H17Q19 12 19 14V22H15.6V17H9.4V22Z" fill="#41a8e0" /></T>,
  <T><path d="M8 6V3Q8 0 12 0T16 3V6" fill="none" stroke="#ddd" strokeWidth="1.4" /><path d="M1 5H23V21Q23 23 21 23H3Q1 23 1 21Z" fill="#fff" /><path d="M7 9H11.5V13.5H7Z" fill="#f25022" /><path d="M12.5 9H17V13.5H12.5Z" fill="#7fba00" /><path d="M7 14.5H11.5V19H7Z" fill="#00a4ef" /><path d="M12.5 14.5H17V19H12.5Z" fill="#ffb900" /></T>,
  <T><circle cx="12" cy="12" r="11" fill="#fbc116" /><path d="M12 12 2.5 6.5A11 11 0 0 1 21.6 6.5H12Z" fill="#e33b2e" /><path d="M2.5 6.5 7.3 14.8 12 17 11 23A11 11 0 0 1 2.5 6.5Z" fill="#229a4b" /><circle cx="12" cy="12" r="5.3" fill="#fff" /><circle cx="12" cy="12" r="4.2" fill="#4285f4" /></T>,
  <T><circle cx="8" cy="8" r="7" fill="#0aa5e8" /><circle cx="15" cy="15" r="7.5" fill="#0aa5e8" /><circle cx="11.5" cy="11.5" r="8.6" fill="#fff" /><path d="M15 8Q14 6 11.5 6T8.2 8.6Q8.2 10.6 11.5 11.4T15 14.2Q15 17 11.5 17T8 14.6" fill="none" stroke="#0a98df" strokeWidth="2.4" /><Ok /></T>,
  <Office c="#1d7044" l="X" lines="M15 6H22M15 9.5H22M15 13H22M15 16.5H22M18.5 4V20" />,
  <T><circle cx="12" cy="12" r="10.5" fill="#0a5cff" /><circle cx="12" cy="10" r="4.2" fill="#fff" /><path d="M10.7 12H13.3V18H10.7Z" fill="#fff" /><circle cx="12" cy="10" r="1.7" fill="#0a5cff" /></T>,
  <T><path d="M12 5H24V17H12Z" fill="#fff" stroke="#0a6cc4" /><path d="M15 10 18 13 22 8" fill="none" stroke="#0a6cc4" strokeWidth="1.8" /><path d="M0 3 13 .5V23L0 20.5Z" fill="#0b6fc8" /><circle cx="6.5" cy="12" r="3.3" fill="none" stroke="#fff" strokeWidth="2" /><path d="M11 14H26V25H11Z" fill="#f5bd77" /><path d="M11 14 18.5 20 26 14" fill="none" stroke="#fff" strokeWidth="1.4" /></T>,
  <T><path d="M2 1H18V23H2Z" fill="#eee" stroke="#999" /><path d="M2 11 18 9V23H2Z" fill="#87cf2e" /><path d="M6 6V13M9 9.5H14" stroke="#245a20" strokeWidth="1.6" /><path d="M22 2 11 17" stroke="#f2ae2c" strokeWidth="3" /><path d="M22.6 1 21.5 2.8" stroke="#d33" strokeWidth="3" /></T>,
  <Office c="#2b579a" l="W" lines="M15 6.5H21.5M15 10H21.5M15 13.5H21.5M15 17H21.5" />,
  <T><ellipse cx="11" cy="13.5" rx="11" ry="9" fill="#dbe9f3" stroke="#8eb4cd" /><circle cx="5" cy="12" r="2" fill="#d74b35" /><circle cx="9" cy="8.5" r="2" fill="#eab52c" /><circle cx="6.4" cy="17" r="2" fill="#58a93e" /><circle cx="12" cy="18.6" r="2" fill="#367fd1" /><circle cx="15" cy="14" r="1.9" fill="#2d3f50" /><path d="M20 2 13 15" stroke="#d98a35" strokeWidth="2.6" /><path d="M21.5 0 18.5 5" stroke="#f1cf96" strokeWidth="4.2" /></T>,
  <T><path d="M7 1 22 3 17 22 1 19Z" fill="#87b8c5" /><path d="M8 3 21 5 18.6 14 5 12Z" fill="#c8e5ec" /><path d="M1 19 17 22V23.5L1 20.8Z" fill="#507e8d" /><path d="M22 3 17 22V23.5L23 4Z" fill="#dfe8ec" /></T>,
  <T><circle cx="19" cy="5" r="3.2" fill="#5059c9" /><circle cx="12" cy="4" r="3.8" fill="#7b83eb" /><path d="M8 9H24V17Q23 21 19 21L10 20Z" fill="#5059c9" /><path d="M1 6H13V18H1Z" fill="#4b53bc" /><path d="M4 9H10M7 9V16" stroke="#fff" strokeWidth="1.9" /><Ok /></T>,
  <T><path d="M2 1 18 0 21 14 5 16Z" fill="#c6cfe5" /><path d="M3.6 2.4 17 1.6 19.4 12.8 6 14.4Z" fill="#1741c7" /><path d="M10 2.2 17 1.6 19.4 12.8Z" fill="#779be9" /><path d="M6 18H20L22 22H7Z" fill="#bdbdbd" /><circle cx="19" cy="19.5" r="5" fill="#e4e4e4" stroke="#888" /><path d="M16.8 18 18.6 19.7 16.8 21.4M21.3 17.4 19.6 19 21.3 20.6" fill="none" stroke="#3b9b32" strokeWidth="1.1" /></T>,
  <T><ellipse cx="11" cy="9" rx="11" ry="8" fill="#d9dde1" transform="rotate(-20 11 9)" /><ellipse cx="11" cy="8" rx="8.7" ry="6" fill="#fff" stroke="#dc5461" strokeWidth="2.3" transform="rotate(-20 11 8)" /><path d="M5 12 19 4M13 13 17 18M20 11 15 18" stroke="#777" strokeWidth="1.4" /><circle cx="13.5" cy="20" r="2.8" fill="none" stroke="#2583cf" strokeWidth="2" /><circle cx="20" cy="18.5" r="2.8" fill="none" stroke="#2583cf" strokeWidth="2" /></T>,
];
function WindowsBar() {
  return (
    <Taskbar>
      <Start>
        <svg width="16" height="16" viewBox="0 0 16 16" fill="#fff"><path d="M0 2.3 7 1.3V7.6H0ZM7.8 1.2 16 0V7.6H7.8ZM0 8.4H7V14.7L0 13.7ZM7.8 8.4H16V16L7.8 14.8Z" /></svg>
      </Start>
      <TaskSearch>
        <svg width="21" height="21" viewBox="0 0 21 21"><circle cx="10.5" cy="10.5" r="8.8" fill="none" stroke="#111" strokeWidth="2.8" /></svg>
        <Fit w={128}>Type here to search</Fit>
        <svg width="12" height="16" viewBox="0 0 12 16" fill="none" stroke="#333" strokeWidth="1.1"><rect x="3.5" y=".6" width="5" height="10" rx="2" /><path d="M1 8V10Q1 13 6 13T11 10V8M6 13V15.5M3.5 15.5H8.5" /></svg>
      </TaskSearch>
      <TaskCell>
        <svg width="17" height="17" viewBox="0 0 17 17" fill="none" stroke="#fff" strokeWidth="1.2"><path d="M1 0V3H12V0M1 17V14H12V17M1 5.5H11.5V11.5H1ZM15 0V5M15 9V17" /><path d="M13.8 5.6H16.8V8.8H13.8Z" fill="#fff" stroke="none" /></svg>
      </TaskCell>
      <Gap $w={5.5} />
      {TASKS.map((icon, i) => (
        <TaskCell key={i} $run $hot={i === 2}>{icon}</TaskCell>
      ))}
      <Tray>
        <TrayItem>
          <svg width="15" height="16" viewBox="0 0 15 16" fill="none" stroke="#fff" strokeWidth="1.2"><circle cx="10.5" cy="3" r="2.4" /><path d="M7.4 8.5Q8 6.4 10.5 6.4T14.4 10" /><circle cx="4.6" cy="8" r="2.4" /><path d="M.6 15.5Q.8 11.4 4.6 11.4T8.6 15.5" /></svg>
        </TrayItem>
        <Gap $w={10.5} />
        <TrayItem><Chev w={12} c="#fff" d="M.5 4.6 4 1 7.5 4.6" /></TrayItem>
        <TrayItem><svg width="13" height="10" viewBox="0 0 13 10"><path d="M0 0H13V10H0Z" fill="#f7c77e" /><path d="M0 0 6.5 5.5 13 0" fill="#2b2b2b" stroke="#f7c77e" strokeWidth=".5" /></svg></TrayItem>
        <TrayItem><svg width="16" height="11" viewBox="0 0 16 11" fill="#1183d8"><path d="M4 11Q0 11 0 7.6T3.4 4Q5 0 8.6.4T12.6 4.4Q16 4.6 16 7.8T12.6 11Z" /><path d="M5 11 11.6 5Q16 4.4 16 7.8T12.6 11Z" fill="#35a9ee" /></svg></TrayItem>
        <TrayItem><svg width="16" height="13" viewBox="0 0 16 13" fill="none" stroke="#fff" strokeWidth="1.2"><path d="M6 4H14V11H4.4V9M15 6V9M1.6 0V3M4.6 0V3M.6 3H5.6V5.4Q5 7 3.1 7T.6 5.4ZM3.1 7V12" /><path d="M7 6H12.4V9H7Z" fill="#fff" stroke="none" /></svg></TrayItem>
        <TrayItem><svg width="13" height="13" viewBox="0 0 13 13" fill="none" stroke="#ddd" strokeWidth="1.1"><path d="M.8 13A12 12 0 0 1 12.6 1M4 13A9 9 0 0 1 12.6 4.4M7 13A6 6 0 0 1 12.6 7.6" /><circle cx="11.4" cy="11.6" r="1.4" fill="#fff" stroke="none" /></svg></TrayItem>
        <Clock>
          <div><Fit w={42}>3:52 PM</Fit></div>
          <div><Fit w={52}>9/30/2019</Fit></div>
        </Clock>
        <Gap $w={13} />
        <svg width="17" height="17" viewBox="0 0 17 17"><path d="M0 0H16V12H9L6 15.5V12H0Z" fill="#fff" /><path d="M3 3.5H13M3 6H13M3 8.5H10" stroke="#22282c" strokeWidth="1.1" /><path d="M9 16.5V13L14 8.6 16.6 12 13 16.5Z" fill="#22282c" stroke="#fff" strokeWidth=".9" /></svg>
      </Tray>
    </Taskbar>
  );
}

export default function App() {
  return (
    <Screen>
      <Global />
      <TabStrip />
      <Browser host="pnguat.numerify.com" hostW={131} />
      <Header />
      <Tools />
      <Work query="Tota" datasetW={206} value="20,872" />
      <WindowsBar />
      <Overlay>
        <Shifted>
          <StripEdge />
          <Browser low host="png.numerify.com" hostW={111} />
          <Tools down />
          <Work detail query="Total" datasetW={167} value="62,262" />
        </Shifted>
      </Overlay>
      <GreenBox $x={1203} $y={245} $w={144} $h={67} $b={5} />
      <GreenBox $x={1106} $y={459} $w={178} $h={69} $b={3} />
      <GreenText $x={1085} $y={221}><Fit w={26}>UAT</Fit></GreenText>
      <GreenText $x={1060} $y={438}><Fit w={90}>PROD Instance</Fit></GreenText>
    </Screen>
  );
}
